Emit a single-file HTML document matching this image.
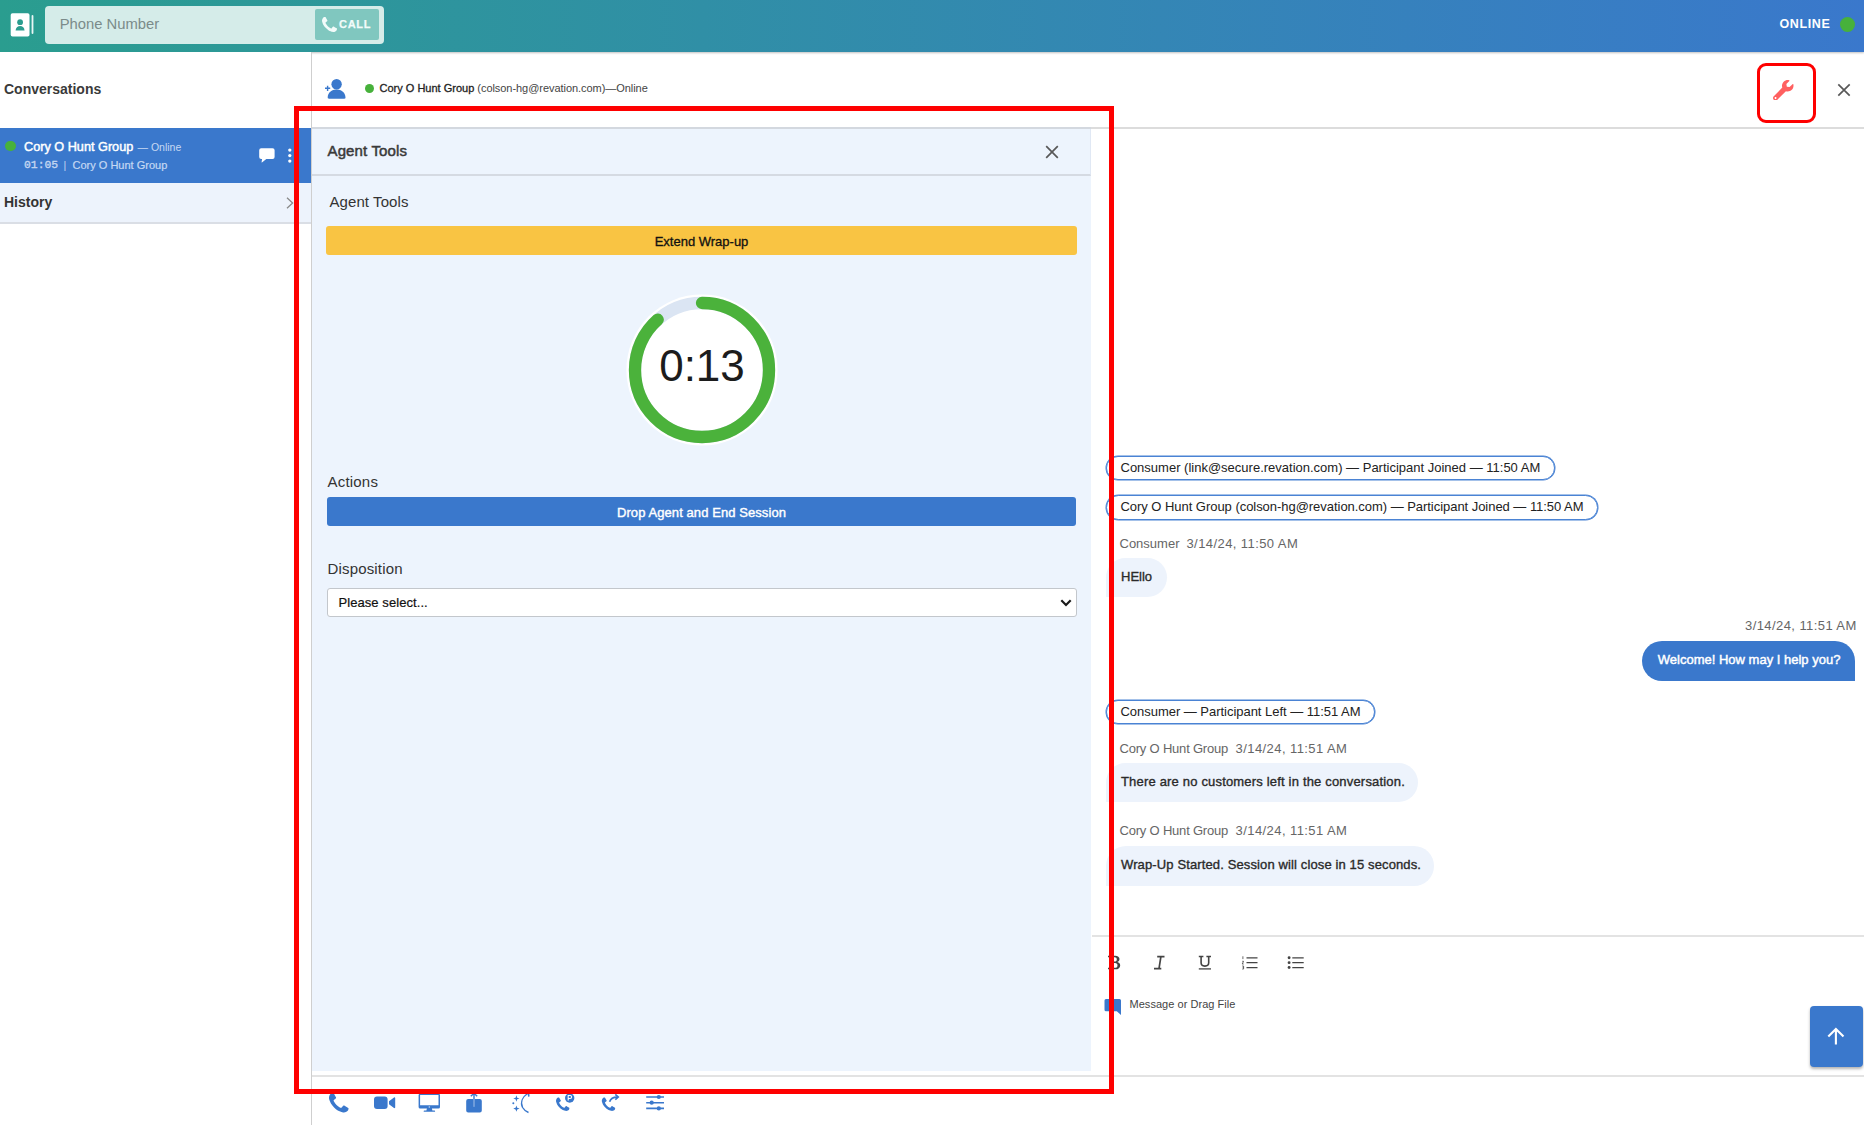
<!DOCTYPE html>
<html>
<head>
<meta charset="utf-8">
<title>Agent Tools</title>
<style>
*{box-sizing:border-box;margin:0;padding:0}
html,body{width:1864px;height:1125px;overflow:hidden;background:#fff}
body{font-family:"Liberation Sans",sans-serif;color:#333;position:relative}
.abs{position:absolute}
#topbar{left:0;top:0;width:1864px;height:52px;background:linear-gradient(90deg,#2a9d8f 0%,#3a78cc 100%);box-shadow:0 1px 2px rgba(0,0,0,.25)}
#phonebox{left:45px;top:6px;width:339px;height:38px;background:#d5ece9;border-radius:4px}
#phonebox .ph{left:14.7px;top:9.5px;font-size:14.8px;color:#7b8b8a;line-height:17px}
#callbtn{left:269.5px;top:3px;width:64.5px;height:31px;background:#80c7bf;border-radius:2px}
#callbtn span{left:24.5px;top:9px;font-size:11px;font-weight:bold;letter-spacing:.7px;color:#f2fbfa;line-height:13px;-webkit-text-stroke:.25px #f2fbfa}
#online{left:1779.5px;top:17px;font-size:12.5px;font-weight:bold;letter-spacing:.6px;color:#fff;line-height:14px}
#onlinedot{left:1840px;top:17px;width:15px;height:15px;border-radius:50%;background:#47b13b}
#sidebar{left:0;top:52px;width:312px;height:1073px;border-right:1px solid #cfcfcf;background:#fff}
#convtitle{left:4px;top:81px;font-size:14px;font-weight:bold;color:#3a3a3a;line-height:16px}
#convitem{left:0;top:128px;width:311px;height:55.5px;background:#3a78cc}
#history{left:0;top:183px;width:311px;height:41px;background:#edf3fc;border-bottom:2px solid #dadee5}
#history span{left:4px;top:11px;font-size:14px;font-weight:bold;color:#333;line-height:17px}
#hdrline{left:312px;top:127px;width:1552px;height:2px;background:#dcdcdc}
#hdrline2{left:312px;top:127px;width:779px;height:2px;background:#d3d8df}
#panel{left:312px;top:128px;width:779px;height:942.5px;background:#edf4fd}
#panelhdr{left:0;top:0;width:779px;height:48px;border-bottom:2px solid #d5dae2;border-right:1px solid #e0e8f4}
.lbl{font-size:15px;color:#333;line-height:17px}
#extend{left:14px;top:98.200px;width:751px;height:28.800px;background:#f9c443;border-radius:3px;text-align:center;font-size:13px;line-height:32px;color:#111;-webkit-text-stroke:.3px #111}
#drop{left:15px;top:369.300px;width:749px;height:28.700px;background:#3a78cc;border-radius:3px;text-align:center;font-size:13px;line-height:31.5px;color:#fff;letter-spacing:.08px;-webkit-text-stroke:.4px #fff}
#select{left:15px;top:460px;width:750px;height:29px;background:#fff;border:1px solid #c3c7cc;border-radius:3px;font-size:13px;line-height:27px;padding-left:10.5px;color:#111;letter-spacing:.07px;-webkit-text-stroke:.2px #111}
#redbox{left:294px;top:106px;width:820px;height:988px;border:5px solid #fe0000}
#wrenchbox{left:1757px;top:63px;width:59px;height:60px;border:3px solid #fe0000;border-radius:9px}
.sys{height:24.5px;border:1px solid #4a83d4;box-shadow:0 0 0 .5px #4a83d4;border-radius:13px;font-size:13px;line-height:22px;padding:0 14px;color:#222;white-space:nowrap;background:#fff}
.meta{font-size:13px;color:#666;line-height:15px;white-space:nowrap}
.bub{height:39.5px;border-radius:20px 20px 20px 0;background:#edf3fc;font-size:13px;line-height:38px;padding:0 15.5px;color:#2a2a2a;white-space:nowrap;-webkit-text-stroke:.35px #2a2a2a}
.bubme{background:#3a78cc;color:#fff;-webkit-text-stroke:.45px #fff;border-radius:20px 20px 0 20px}
.hline{height:2px;background:#e3e3e3}
</style>
</head>
<body>
<div id="topbar" class="abs"></div>
<div id="sidebar" class="abs"></div>
<div id="hdrline" class="abs"></div>

<!-- top bar content -->
<svg class="abs" style="left:9px;top:11px" width="28" height="28" viewBox="0 0 28 28">
  <rect x="1.7" y="2.3" width="18.8" height="23.2" rx="1.8" fill="#fff"/>
  <rect x="22.6" y="4" width="1.8" height="19" rx=".9" fill="#e9f6f4"/>
  <circle cx="11.1" cy="11.2" r="2.9" fill="#2a9d8f"/>
  <path d="M6.6 19.4c.4-3 2.3-4.3 4.5-4.3s4.1 1.300 4.500 4.300z" fill="#2a9d8f"/>
</svg>
<div id="phonebox" class="abs"><span class="abs ph">Phone Number</span>
  <div id="callbtn" class="abs">
    <svg class="abs" style="left:7.5px;top:8.3px" width="15" height="15" viewBox="192 128 1408 1408"><path fill="#f2fbfa" d="M1600 1240q0 27-10 70.500t-21 68.500q-21 50-122 106-94 51-186 51-27 0-53-3.500t-57.500-12.500-47-14.500-55.500-20.500-49-18q-98-35-175-83-127-79-264-216t-216-264q-48-77-83-175-3-9-18-49t-20.500-55.500-14.500-47-12.500-57.500-3.500-53q0-92 51-186 56-101 106-122 25-11 68.500-21t70.500-10q14 0 21 3 18 6 53 76 11 19 30 54t35 63.500 31 53.500q3 4 17.500 25t21.500 35.500 7 28.500q0 20-28.500 50t-62 55-62 53-28.500 46q0 9 5 22.500t8.500 20.500 14 24 11.500 19q76 137 174 235t235 174q2 1 19 11.500t24 14 20.500 8.500 22.500 5q18 0 46-28.500t53-62 55-62 50-28.500q14 0 28.500 7t35.500 21.500 25 17.500q25 15 53.500 31t63.500 35 54 30q70 35 76 53 3 7 3 21z"/></svg>
    <span class="abs">CALL</span></div>
</div>
<div id="online" class="abs">ONLINE</div>
<div id="onlinedot" class="abs"></div>

<!-- sidebar -->
<div id="convtitle" class="abs">Conversations</div>
<div id="convitem" class="abs">
  <div class="abs" style="left:5px;top:12.5px;width:10.5px;height:10.5px;border-radius:50%;background:#47b13b"></div>
  <div class="abs" style="left:24px;top:11.8px;font-size:12.7px;line-height:14px;color:#fff;-webkit-text-stroke:.45px #fff;white-space:nowrap">Cory O Hunt Group</div>
  <div class="abs" style="left:137.5px;top:12.8px;font-size:10.5px;line-height:13px;color:#c6d9f3;white-space:nowrap">— Online</div>
  <div class="abs" style="left:24px;top:30.5px;font-family:'Liberation Mono',monospace;font-size:11.4px;line-height:13px;color:#c3d6f1;-webkit-text-stroke:.35px #c3d6f1;white-space:nowrap">01:05</div>
  <div class="abs" style="left:63.5px;top:30.5px;font-size:10.5px;line-height:13px;color:#c3d6f1">|</div>
  <div class="abs" style="left:72.5px;top:30.5px;font-size:11px;line-height:13px;color:#c6d9f3;white-space:nowrap;-webkit-text-stroke:.2px #c6d9f3">Cory O Hunt Group</div>
  <svg class="abs" style="left:258px;top:19px" width="18" height="17" viewBox="0 0 18 17"><path fill="#fff" d="M3.2 1.300h11.400a2 2 0 0 1 2 2v6.600a2 2 0 0 1-2 2H8.300L4.300 15.300c-.4.300-.8.100-.7-.4l.5-3h-.9a2 2 0 0 1-2-2V3.300a2 2 0 0 1 2-2z"/></svg>
  <svg class="abs" style="left:286px;top:19px" width="8" height="18" viewBox="0 0 8 18"><circle cx="3.800" cy="3.100" r="1.650" fill="#fff"/><circle cx="3.800" cy="8.600" r="1.650" fill="#fff"/><circle cx="3.800" cy="14.100" r="1.650" fill="#fff"/></svg>
</div>
<div id="history" class="abs"><span class="abs">History</span>
  <svg class="abs" style="left:284px;top:13px" width="12" height="14" viewBox="0 0 12 14"><path d="M3 1.800l5.600 5.200L3 12.200" fill="none" stroke="#8a8a8a" stroke-width="1.300"/></svg>
</div>

<!-- conversation header -->
<svg class="abs" style="left:323px;top:77px" width="25" height="24" viewBox="0 0 25 24">
  <circle cx="13.600" cy="7.300" r="5.200" fill="#3a78cc"/>
  <path d="M4.700 20.600c0-5 4-8 8.900-8s8.900 3 8.900 8c0 .8-.4 1.200-1.100 1.200H5.800c-.7 0-1.100-.4-1.100-1.200z" fill="#3a78cc"/>
  <path d="M2 11.300h5.200M4.600 8.700v5.200" stroke="#3a78cc" stroke-width="1.400" fill="none"/>
</svg>
<div class="abs" style="left:364.500px;top:83.500px;width:9.500px;height:9.500px;border-radius:50%;background:#47b13b"></div>
<div class="abs" style="left:379.500px;top:82px;font-size:11px;line-height:13px;color:#222;white-space:nowrap"><span style="-webkit-text-stroke:.3px #222">Cory O Hunt Group</span> <span style="color:#444;letter-spacing:-.05px">(colson-hg@revation.com)—Online</span></div>

<svg class="abs" style="left:1773px;top:79.5px" width="20.5" height="20.5" viewBox="0 0 512 512"><path fill="#ff6060" d="M507.73 109.1c-2.240-9.030-13.540-12.090-20.120-5.510l-74.360 74.360-67.880-11.310-11.310-67.880 74.360-74.360c6.620-6.620 3.430-17.900-5.660-20.160-47.380-11.740-99.550.91-136.580 37.930-39.640 39.640-50.550 97.100-34.050 147.200L18.740 402.760c-24.990 24.990-24.990 65.510 0 90.500 24.990 24.990 65.510 24.990 90.500 0l213.210-213.210c50.120 16.710 107.470 5.680 147.370-34.220 37.070-37.070 49.700-89.320 37.910-136.730zM64 472c-13.250 0-24-10.750-24-24 0-13.260 10.750-24 24-24s24 10.740 24 24c0 13.250-10.750 24-24 24z"/></svg>
<svg class="abs" style="left:1835px;top:81px" width="18" height="18" viewBox="0 0 18 18"><path d="M3.300 3.300l11.400 11.400M14.700 3.300L3.300 14.700" stroke="#585858" stroke-width="1.700" fill="none"/></svg>

<!-- chat -->
<div class="abs sys" style="left:1105.500px;top:455.500px;width:449.500px">Consumer (link@secure.revation.com) — Participant Joined — 11:50 AM</div>
<div class="abs sys" style="left:1105.500px;top:495px;width:492.500px;letter-spacing:-.04px">Cory O Hunt Group (colson-hg@revation.com) — Participant Joined — 11:50 AM</div>
<div class="abs meta" style="left:1119.500px;top:536px"><span>Consumer</span><span style="margin-left:7px;letter-spacing:.42px">3/14/24, 11:50 AM</span></div>
<div class="abs bub" style="left:1105.500px;top:557.500px;width:61.500px">HEllo</div>
<div class="abs meta" style="left:1745px;top:618px;letter-spacing:.42px">3/14/24, 11:51 AM</div>
<div class="abs bub bubme" style="left:1642.300px;top:640.600px;width:212.300px;height:40px">Welcome! How may I help you?</div>
<div class="abs sys" style="left:1105.500px;top:699.500px;width:269.500px;letter-spacing:-.03px">Consumer — Participant Left — 11:51 AM</div>
<div class="abs meta" style="left:1119.500px;top:740.800px"><span style="letter-spacing:-.2px">Cory O Hunt Group</span><span style="margin-left:7.500px;letter-spacing:.42px">3/14/24, 11:51 AM</span></div>
<div class="abs bub" style="left:1105.500px;top:762.500px;width:312.500px;letter-spacing:.18px">There are no customers left in the conversation.</div>
<div class="abs meta" style="left:1119.500px;top:823px"><span style="letter-spacing:-.2px">Cory O Hunt Group</span><span style="margin-left:7.500px;letter-spacing:.42px">3/14/24, 11:51 AM</span></div>
<div class="abs bub" style="left:1105.500px;top:846px;width:328.500px;letter-spacing:.125px">Wrap-Up Started. Session will close in 15 seconds.</div>

<!-- composer -->
<div class="abs hline" style="left:1092px;top:935px;width:772px"></div>
<svg class="abs" style="left:1106px;top:953px" width="18" height="19" viewBox="0 0 18 19"><path fill="#444" fill-rule="evenodd" d="M2 2.700h7.200c2.600 0 4.300 1.300 4.300 3.400 0 1.500-.9 2.500-2.200 3 1.700.4 2.900 1.500 2.900 3.300 0 2.400-1.900 3.900-4.700 3.900H2v-1.600h1.600V4.300H2zm4.200 1.600v4.200h2.500c1.300 0 2.100-.8 2.100-2.100s-.8-2.100-2.100-2.100zm0 5.800v4.600h2.900c1.500 0 2.400-.9 2.400-2.300s-.9-2.300-2.400-2.300z"/></svg>
<svg class="abs" style="left:1152px;top:953px" width="16" height="19" viewBox="0 0 16 19"><path d="M5.200 3.600h7.300M2 15.700h7.300M7 15.700L8.900 3.600" stroke="#444" stroke-width="1.700" fill="none"/></svg>
<svg class="abs" style="left:1197px;top:953px" width="16" height="19" viewBox="0 0 16 19"><path d="M1.800 3.500h4.600M9.400 3.500H14M4.100 3.500v6.300c0 2 1.500 3.300 3.800 3.300s3.800-1.300 3.800-3.300V3.500" stroke="#444" stroke-width="1.600" fill="none"/><path d="M1.800 15.900H14" stroke="#444" stroke-width="1.300"/></svg>
<svg class="abs" style="left:1241px;top:954px" width="18" height="17" viewBox="0 0 18 17"><path d="M5.500 3.800h11M5.500 8.650h11M5.500 13.500h11" stroke="#444" stroke-width="1.250" fill="none"/><path d="M1.900 2.300v2.800M1.200 7.300h1.400L1.200 10h1.500M1.200 12h1.400v3H1.200M1.700 13.500h.9" stroke="#444" stroke-width=".8" fill="none"/></svg>
<svg class="abs" style="left:1286px;top:954px" width="19" height="17" viewBox="0 0 19 17"><path d="M6.300 3.800h11.400M6.300 8.650h11.400M6.300 13.500h11.400" stroke="#444" stroke-width="1.250" fill="none"/><circle cx="3.100" cy="3.800" r="1.450" fill="#444"/><circle cx="3.100" cy="8.650" r="1.450" fill="#444"/><circle cx="3.100" cy="13.500" r="1.450" fill="#444"/></svg>
<svg class="abs" style="left:1103px;top:998px" width="20" height="19" viewBox="0 0 20 19"><path fill="#3a78cc" d="M3 1h13.500a1.500 1.500 0 0 1 1.500 1.500V17l-4.200-3.700H3A1.500 1.500 0 0 1 1.500 11.800V2.500A1.500 1.500 0 0 1 3 1z"/></svg>
<div class="abs" style="left:1129.500px;top:998.400px;font-size:11px;line-height:13px;color:#444;white-space:nowrap;letter-spacing:.04px">Message or Drag File</div>
<div class="abs" style="left:1810px;top:1006px;width:52.500px;height:61px;background:#3a78cc;border-radius:4px;box-shadow:0 2px 3px rgba(0,0,0,.3)"></div>
<svg class="abs" style="left:1824px;top:1024px" width="24" height="24" viewBox="0 0 24 24"><path d="M11.900 20.500V5.300M4.300 12.600l7.600-7.600 7.600 7.600" stroke="#fff" stroke-width="2.100" fill="none"/></svg>
<div class="abs hline" style="left:312px;top:1075px;width:1552px"></div>

<!-- bottom action icons -->
<svg class="abs" style="left:329px;top:1093px" width="19.5" height="19.5" viewBox="192 128 1408 1408"><path fill="#3a78cc" d="M1600 1240q0 27-10 70.500t-21 68.500q-21 50-122 106-94 51-186 51-27 0-53-3.500t-57.500-12.500-47-14.500-55.500-20.500-49-18q-98-35-175-83-127-79-264-216t-216-264q-48-77-83-175-3-9-18-49t-20.500-55.500-14.500-47-12.500-57.500-3.500-53q0-92 51-186 56-101 106-122 25-11 68.500-21t70.500-10q14 0 21 3 18 6 53 76 11 19 30 54t35 63.500 31 53.500q3 4 17.500 25t21.500 35.500 7 28.500q0 20-28.500 50t-62 55-62 53-28.500 46q0 9 5 22.500t8.500 20.500 14 24 11.500 19q76 137 174 235t235 174q2 1 19 11.500t24 14 20.500 8.500 22.500 5q18 0 46-28.500t53-62 55-62 50-28.500q14 0 28.500 7t35.500 21.500 25 17.500q25 15 53.500 31t63.500 35 54 30q70 35 76 53 3 7 3 21z"/></svg>
<svg class="abs" style="left:373px;top:1094px" width="24" height="18" viewBox="0 0 24 18"><rect x="1" y="2.400" width="13.600" height="12.600" rx="3" fill="#3a78cc"/><path d="M16 7.200l5-3.800c.5-.4 1.200 0 1.200.6v9.400c0 .6-.7 1-1.200.6l-5-3.800z" fill="#3a78cc"/></svg>
<svg class="abs" style="left:418px;top:1092px" width="23" height="21" viewBox="0 0 23 21"><path fill="#3a78cc" fill-rule="evenodd" d="M2.200 1.400h18.200a1.600 1.600 0 0 1 1.600 1.600v12a1.600 1.600 0 0 1-1.600 1.600h-6.500l.5 1.900h2.100a.65.65 0 0 1 0 1.300H6.300a.65.650 0 0 1 0-1.300h2.100l.5-1.900H2.200A1.600 1.600 0 0 1 .6 15V3a1.600 1.600 0 0 1 1.600-1.600zM2.100 2.900v10.400h18.400V2.900z"/><circle cx="11.300" cy="15" r=".7" fill="#cfe0f6"/></svg>
<svg class="abs" style="left:465px;top:1090px" width="19" height="24" viewBox="0 0 19 24"><path fill="#3a78cc" d="M3.200 9h4.900v7.300h1.800V9h4.900a2 2 0 0 1 2 2v9.500a2 2 0 0 1-2 2H3.200a2 2 0 0 1-2-2V11a2 2 0 0 1 2-2z"/><path d="M9 16V3.600M5.800 6.300L9 3.200l3.200 3.100" stroke="#3a78cc" stroke-width="1.400" fill="none"/></svg>
<svg class="abs" style="left:510px;top:1090px" width="22" height="25" viewBox="0 0 22 25"><path d="M18.300 3C13 6.500 9.800 12 12.600 17.500c1.300 2.300 3.200 3.900 5.900 5" stroke="#3a78cc" stroke-width="1.400" fill="none"/><path d="M14.800 3.400l3.700-.8.300 4" stroke="#3a78cc" stroke-width="1.600" fill="none"/><path fill="#3a78cc" d="M6.400 5.300l.8 2.400 2.400.8-2.400.8-.8 2.400-.8-2.400-2.400-.8 2.400-.8zM6.400 15.400l.8 2.400 2.400.8-2.400.8-.8 2.400-.8-2.400-2.400-.8 2.400-.8z"/><circle cx="3.300" cy="13.300" r="1" fill="#3a78cc"/></svg>
<svg class="abs" style="left:555px;top:1092px" width="22" height="22" viewBox="0 0 22 22"><g transform="translate(1,5.500) scale(.00952) translate(-192,-128)"><path fill="#3a78cc" d="M1600 1240q0 27-10 70.500t-21 68.500q-21 50-122 106-94 51-186 51-27 0-53-3.500t-57.500-12.500-47-14.500-55.500-20.500-49-18q-98-35-175-83-127-79-264-216t-216-264q-48-77-83-175-3-9-18-49t-20.500-55.500-14.500-47-12.500-57.500-3.500-53q0-92 51-186 56-101 106-122 25-11 68.500-21t70.500-10q14 0 21 3 18 6 53 76 11 19 30 54t35 63.500 31 53.500q3 4 17.500 25t21.500 35.500 7 28.500q0 20-28.500 50t-62 55-62 53-28.500 46q0 9 5 22.500t8.500 20.500 14 24 11.500 19q76 137 174 235t235 174q2 1 19 11.500t24 14 20.500 8.500 22.500 5q18 0 46-28.500t53-62 55-62 50-28.500q14 0 28.500 7t35.500 21.500 25 17.500q25 15 53.500 31t63.500 35 54 30q70 35 76 53 3 7 3 21z"/></g><circle cx="14.700" cy="6" r="4.700" fill="#3a78cc"/><path d="M13.200 8.600V3.500h1.900a1.500 1.500 0 0 1 0 3h-1.900" stroke="#fff" stroke-width="1.100" fill="none"/></svg>
<svg class="abs" style="left:600px;top:1092px" width="22" height="22" viewBox="0 0 22 22"><g transform="translate(1.800,5.500) scale(.00952) translate(-192,-128)"><path fill="#3a78cc" d="M1600 1240q0 27-10 70.500t-21 68.500q-21 50-122 106-94 51-186 51-27 0-53-3.500t-57.500-12.500-47-14.500-55.500-20.500-49-18q-98-35-175-83-127-79-264-216t-216-264q-48-77-83-175-3-9-18-49t-20.500-55.500-14.500-47-12.500-57.500-3.500-53q0-92 51-186 56-101 106-122 25-11 68.500-21t70.500-10q14 0 21 3 18 6 53 76 11 19 30 54t35 63.500 31 53.500q3 4 17.500 25t21.500 35.500 7 28.500q0 20-28.500 50t-62 55-62 53-28.500 46q0 9 5 22.500t8.500 20.500 14 24 11.500 19q76 137 174 235t235 174q2 1 19 11.500t24 14 20.500 8.500 22.500 5q18 0 46-28.500t53-62 55-62 50-28.500q14 0 28.500 7t35.500 21.500 25 17.500q25 15 53.500 31t63.500 35 54 30q70 35 76 53 3 7 3 21z"/></g><path d="M9.600 9.700c1-3 4-4.700 8-4.600" stroke="#3a78cc" stroke-width="1.700" fill="none"/><path d="M15.300 2.300l3 2.800-3 2.600" stroke="#3a78cc" stroke-width="1.600" fill="none"/></svg>
<svg class="abs" style="left:645px;top:1093px" width="21" height="19" viewBox="0 0 21 19"><path d="M1.200 4h17.800M1.200 9.700h17.800M1.200 15.400h17.800" stroke="#3a78cc" stroke-width="1.600" fill="none"/><circle cx="13.800" cy="4" r="2.100" fill="#3a78cc"/><circle cx="6.700" cy="9.700" r="2.100" fill="#3a78cc"/><circle cx="13.800" cy="15.400" r="2.100" fill="#3a78cc"/></svg>

<!-- agent tools panel -->
<div id="panel" class="abs">
  <div id="panelhdr" class="abs"></div>
  <div class="abs lbl" style="left:15.500px;top:14.400px;color:#3a3a3a;-webkit-text-stroke:.5px #3a3a3a;letter-spacing:.13px">Agent Tools</div>
  <svg class="abs" style="left:731px;top:15px" width="18" height="18" viewBox="0 0 18 18"><path d="M3.200 3.200l11.600 11.600M14.800 3.200L3.200 14.800" stroke="#585858" stroke-width="1.700" fill="none"/></svg>
  <div class="abs lbl" style="left:17.500px;top:64.800px;letter-spacing:.08px">Agent Tools</div>
  <div id="extend" class="abs">Extend Wrap-up</div>
  <svg class="abs" style="left:314px;top:165.600px" width="152" height="152" viewBox="0 0 152 152">
    <circle cx="76" cy="76" r="75.6" fill="#fff"/>
    <circle cx="76" cy="76" r="67" fill="none" stroke="#dbe5f3" stroke-width="12.3"/>
    <circle cx="76" cy="76" r="67" fill="none" stroke="#4bb23b" stroke-width="12.3" stroke-linecap="round" stroke-dasharray="372 421" transform="rotate(-90 76 76)"/>
  </svg>
  <div class="abs" style="left:314px;top:213px;width:152px;text-align:center;font-size:44px;line-height:50px;color:#1c1c1c">0:13</div>
  <div class="abs lbl" style="left:15.500px;top:344.600px;letter-spacing:.2px">Actions</div>
  <div id="drop" class="abs">Drop Agent and End Session</div>
  <div class="abs lbl" style="left:15.500px;top:432px;letter-spacing:.17px">Disposition</div>
  <div id="select" class="abs">Please select...
    <svg class="abs" style="right:3px;top:7px" width="14" height="14" viewBox="0 0 14 14"><path d="M2.300 4.300L7 9l4.700-4.700" stroke="#1a1a1a" stroke-width="2.200" fill="none"/></svg>
  </div>
</div>

<div id="hdrline2" class="abs"></div>
<div id="redbox" class="abs"></div>
<div id="wrenchbox" class="abs"></div>
</body>
</html>
